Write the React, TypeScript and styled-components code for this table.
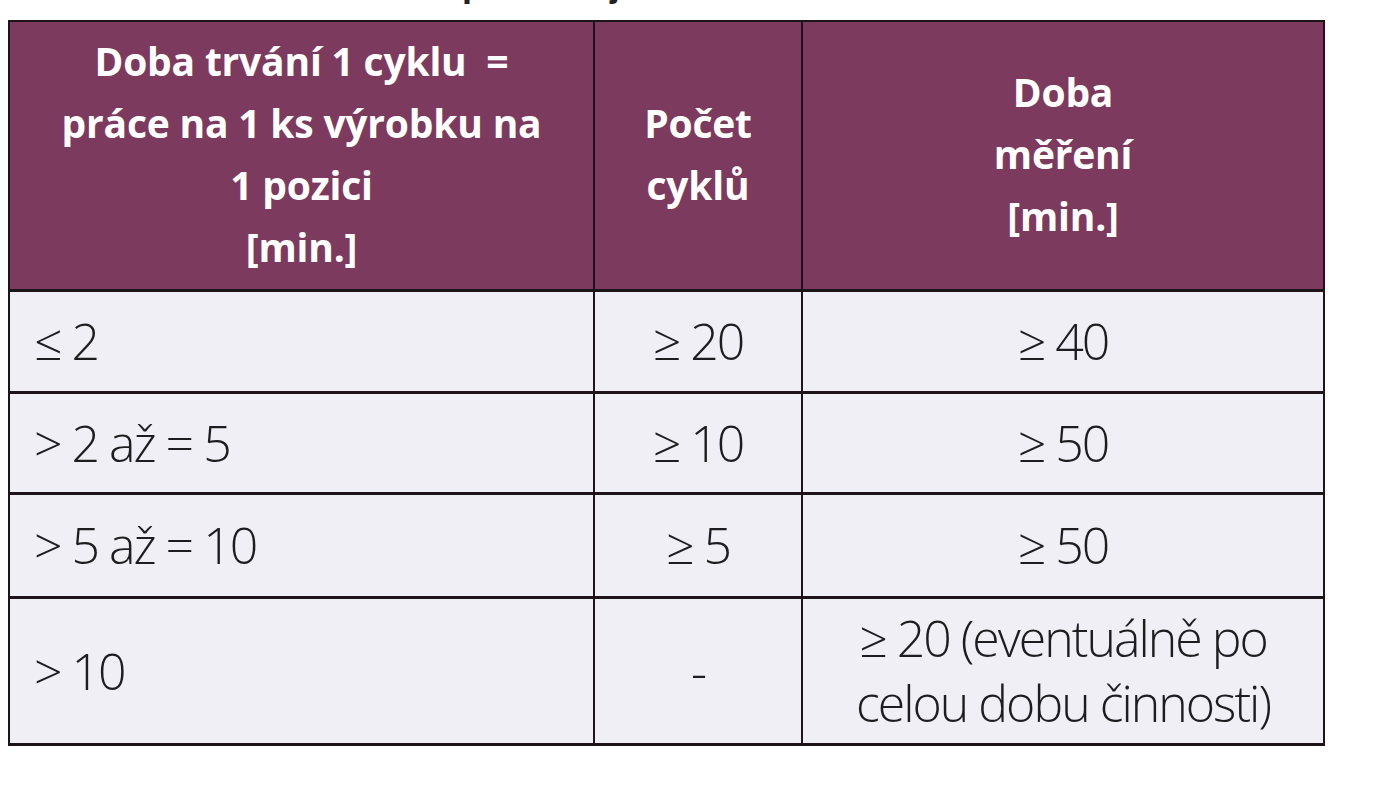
import React from "react";
import styled, { createGlobalStyle } from "styled-components";

const Global = createGlobalStyle`
  html, body { margin: 0; padding: 0; background: #ffffff; }
  body { font-family: "Open Sans", "DejaVu Sans", sans-serif; }
`;

const Page = styled.div`
  width: 1391px;
  height: 800px;
  padding-left: 8px;
  box-sizing: border-box;
  background: #ffffff;
`;

const Caption = styled.div`
  height: 20px;
  overflow: hidden;
`;

const CaptionLine = styled.div`
  display: flex;
  margin-top: -34px;
  height: 36px;
  line-height: 36px;
  font-family: "Liberation Sans", sans-serif;
  font-weight: 700;
  font-size: 36px;
  color: #222;
  padding-left: 454px;
  gap: 126px;
`;

const Grid = styled.div`
  display: grid;
  grid-template-columns: 585px 208px 522px;
  grid-template-rows: 270px 102px 101px 104px 147px;
  width: max-content;
  border-top: 2px solid #1c1418;
  border-left: 2px solid #1c1418;
`;

const HeadCell = styled.div`
  box-sizing: border-box;
  background: #7c3a5f;
  border-right: 2px solid #1c1418;
  border-bottom: 3px solid #1c1418;
  display: flex;
  align-items: center;
  justify-content: center;
  text-align: center;
  color: #ffffff;
  font-family: "Open Sans", sans-serif;
  font-stretch: 100%;
  font-weight: 700;
  font-size: 39px;
  letter-spacing: -0.2px;
  line-height: 62px;
  padding: 0 6px 4px;
`;

const Cell = styled.div<{ $align?: "left" | "center" }>`
  box-sizing: border-box;
  background: #f0eff6;
  border-right: 2px solid #1c1418;
  border-bottom: 3px solid #1c1418;
  display: flex;
  align-items: center;
  justify-content: ${(p) => (p.$align === "left" ? "flex-start" : "center")};
  text-align: ${(p) => (p.$align === "left" ? "left" : "center")};
  padding: ${(p) => (p.$align === "left" ? "0 0 0 24px" : "0 10px")};
  color: #1d1d1f;
  font-family: "Open Sans", sans-serif;
  font-stretch: 100%;
  font-weight: 300;
  font-size: 50px;
  letter-spacing: -2px;
  line-height: 65px;
`;

const rows: [string, string, React.ReactNode][] = [
  ["≤ 2", "≥ 20", "≥ 40"],
  ["> 2 až = 5", "≥ 10", "≥ 50"],
  ["> 5 až = 10", "≥ 5", "≥ 50"],
  [
    "> 10",
    "-",
    <>
      ≥ 20 (eventuálně po
      <br />
      celou dobu činnosti)
    </>,
  ],
];

export default function App() {
  return (
    <Page>
      <Global />
      <Caption>
        <CaptionLine>
          <span>p</span>
          <span>j</span>
        </CaptionLine>
      </Caption>
      <Grid>
        <HeadCell>
          Doba trvání 1 cyklu&nbsp; =<br />
          práce na 1 ks výrobku na
          <br />1 pozici
          <br />
          [min.]
        </HeadCell>
        <HeadCell>
          Počet
          <br />
          cyklů
        </HeadCell>
        <HeadCell>
          Doba
          <br />
          měření
          <br />
          [min.]
        </HeadCell>
        {rows.map(([a, b, c], i) => (
          <React.Fragment key={i}>
            <Cell $align="left">{a}</Cell>
            <Cell>{b}</Cell>
            <Cell>{c}</Cell>
          </React.Fragment>
        ))}
      </Grid>
    </Page>
  );
}
